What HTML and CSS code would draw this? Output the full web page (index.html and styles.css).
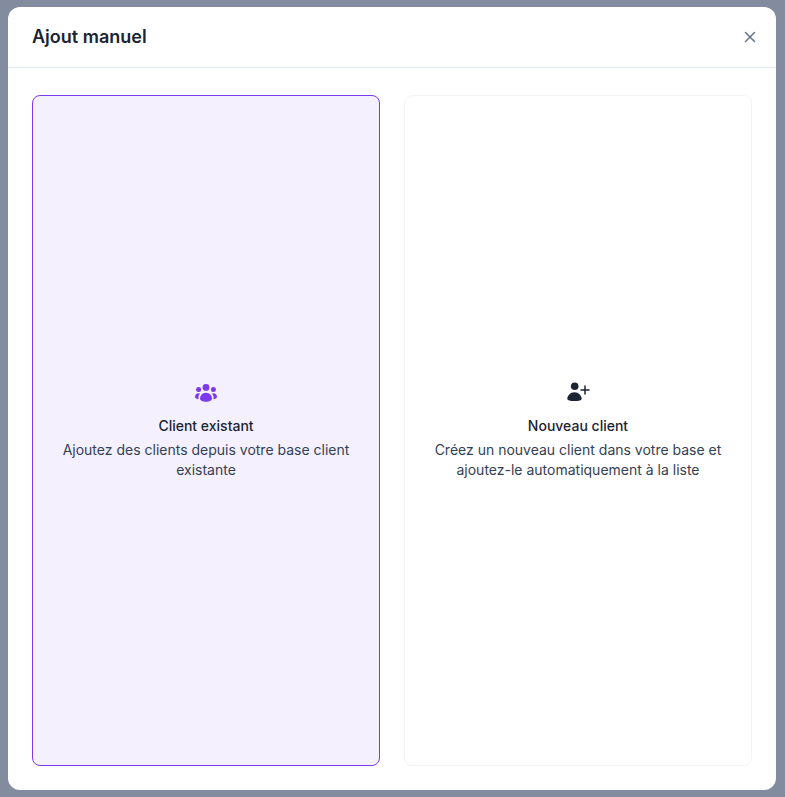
FILE: index.html
```html
<!DOCTYPE html>
<html lang="fr">
<head>
<meta charset="utf-8">
<title>Ajout manuel</title>
<link rel="stylesheet" href="styles.css">
</head>
<body>
<div class="overlay">
  <div class="modal">
    <header class="modal-header">
      <h2 class="modal-title">Ajout manuel</h2>
      <button class="close" aria-label="Fermer">
        <svg width="20" height="20" viewBox="0 0 20 20" fill="none" stroke="#64748b" stroke-width="1.5" stroke-linecap="round"><path d="M5.5 5.5l9 9M14.5 5.500l-9 9"/></svg>
      </button>
    </header>
    <div class="modal-body">
      <div class="option option-selected">
        <svg class="icon" width="24" height="24" viewBox="0 0 24 24" fill="#7c3aed">
          <circle cx="12" cy="5.4" r="3.4"/>
          <circle cx="4.600" cy="7.400" r="2.500"/>
          <circle cx="19.400" cy="7.400" r="2.500"/>
          <path d="M12 10.700c3.500 0 6 2.800 6 5.800 0 2-2.600 3.200-6 3.200s-6-1.200-6-3.200c0-3 2.500-5.800 6-5.800z"/>
          <path d="M4.500 11.200c.5 0 1 .1 1.400.2-.9 1.200-1.500 2.800-1.500 4.600 0 .4 0 .8.100 1.200C2.700 17 1 16.200 1 15c0-2.100 1.500-3.800 3.500-3.800z"/>
          <path d="M19.500 11.200c-.5 0-1 .1-1.400.2.900 1.200 1.500 2.800 1.500 4.600 0 .4 0 .8-.1 1.200 1.800-.2 3.500-1 3.500-2.200 0-2.100-1.500-3.800-3.500-3.800z"/>
        </svg>
        <div class="option-title">Client existant</div>
        <div class="option-text">Ajoutez des clients depuis votre base client existante</div>
      </div>
      <div class="option">
        <svg class="icon" width="24" height="24" viewBox="0 0 24 24" fill="#1a2433">
          <circle cx="8.700" cy="4.200" r="3.800"/>
          <path d="M8.500 10.200c-4.200 0-7.200 3.700-7.200 6.600 0 1.500 3 2.300 7.200 2.300s7.200-.8 7.200-2.300c0-2.900-3-6.600-7.200-6.600z"/>
          <path d="M19 4v8M15 8h8" fill="none" stroke="#1a2433" stroke-width="1.500" stroke-linecap="round"/>
        </svg>
        <div class="option-title">Nouveau client</div>
        <div class="option-text">Créez un nouveau client dans votre base et ajoutez-le automatiquement à la liste</div>
      </div>
    </div>
  </div>
</div>
</body>
</html>
```

FILE: styles.css
```css
* {
  box-sizing: border-box;
}

html,
body {
  margin: 0;
  height: 100%;
}

body {
  font-family: Inter, "Liberation Sans", sans-serif;
  color: #1a2433;
  background: #828c9e;
}

.overlay {
  height: 100%;
  padding: 7px 9px 7px 8px;
  display: flex;
}

.modal {
  flex: 1;
  display: flex;
  flex-direction: column;
  background: #fff;
  border-radius: 12px;
  overflow: hidden;
}

.modal-header {
  height: 61px;
  flex: none;
  display: flex;
  align-items: center;
  justify-content: space-between;
  padding: 0 16px 0 24px;
  border-bottom: 1px solid #e2e8f0;
}

.modal-title {
  margin: 0;
  font-size: 18px;
  line-height: 28px;
  font-weight: 600;
  color: #1a2433;
}

.close {
  display: flex;
  width: 20px;
  height: 20px;
  padding: 0;
  border: 0;
  background: none;
}

.modal-body {
  flex: 1;
  display: grid;
  grid-template-columns: 1fr 1fr;
  gap: 24px;
  padding: 27px 24px 24px;
}

.option {
  display: flex;
  flex-direction: column;
  align-items: center;
  justify-content: center;
  padding: 0 24px;
  border: 1px solid #f1f5f9;
  border-radius: 8px;
  text-align: center;
}

.option-selected {
  background: #f4f0fe;
  border-color: #7c3aed;
}

.icon {
  display: block;
  margin-bottom: 10px;
}

.option-title {
  margin-bottom: 4px;
  font-size: 14px;
  line-height: 20px;
  font-weight: 500;
  color: #1a2433;
}

.option-text {
  font-size: 14px;
  line-height: 20px;
  color: #334155;
}
```
